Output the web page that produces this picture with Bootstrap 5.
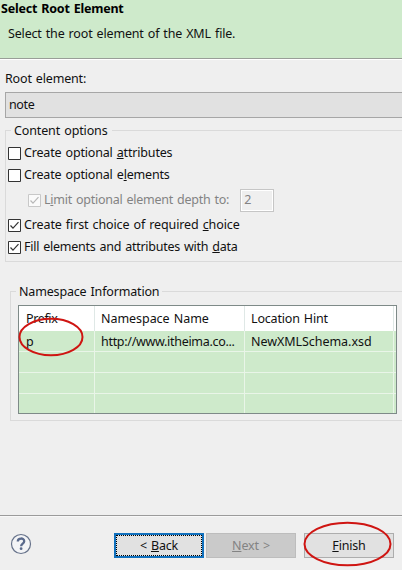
<!DOCTYPE html>
<html lang="en">
<head>
<meta charset="utf-8">
<title>Select Root Element</title>
<meta name="viewport" content="width=device-width, initial-scale=1">
<link href="https://cdn.jsdelivr.net/npm/bootstrap@5.3.0/dist/css/bootstrap.min.css" rel="stylesheet">
<style>
body{width:402px;height:570px;background:#efefef;color:#111;font:12.5px/20px "Noto Sans","Open Sans",sans-serif;white-space:nowrap}
.dialog{width:402px;height:570px}
.t{display:inline-block;line-height:20px;word-spacing:1px;letter-spacing:-.17px}
.w1{letter-spacing:-.21px}.w4,.w12{letter-spacing:-.37px}.w5{letter-spacing:-.13px}
.w8,.w10{letter-spacing:-.25px}.w9{letter-spacing:-.12px}.w13,.w16{letter-spacing:-.05px}.w15{letter-spacing:-.3px}
.banner{height:60px;background:#ceeacb;border-bottom:1px solid #fff;box-shadow:inset 0 -1px #999e98;padding:0 0 0 1px}
.banner h1{font-size:12.5px;height:17px;color:#000}
.banner h1 .t{line-height:17px}
.banner p{margin:7px 0 0 7px}
.root-label{margin:9px 0 0 5px;height:20px}
.combo{margin:3px 0 0 5px;height:26px;background:#e1e1e1;border:1px solid #a6a6a6;border-right:0;padding:2px 0 0 3px}
.group{border:1px solid #dadada;border-right:0}
.group-title{width:max-content;height:20px;margin-top:-10px;margin-left:5px;background:#efefef}
.g1{margin:12px 0 0 5px;height:132px}
.g1 .group-title{padding:0 4px 0 3px;margin-bottom:1px}
.opt{height:22px;gap:3px;padding-left:2px}
.opt svg{width:13px;height:13px;flex:none}
.opt.deep{height:28px;padding-left:22px;color:#838383}
.depth{width:34px;height:23px;border:1px solid #c6c6c6;box-shadow:inset 0 0 0 1px #fff;padding:0 3px;margin-left:8px}
.g2{margin:29px 0 0 10px;height:130px}
.g2 .group-title{padding:0 3px}
.sheet{margin:3px 0 0 7px;width:379px;height:109px;border:1px solid #7e8a88;background:#ceeacb}
.line{display:grid;grid-template-columns:76px 150px 149px 1fr;height:21px;border-bottom:1px solid #e9f5e8}
.line:last-child{border-bottom:0;height:19px}
.line.head{height:25px;background:#fff;border:0}
.line>div{border-right:1px solid #e9f5e8;padding-left:7px;line-height:22px}
.line>div+div{padding-left:6px}
.line.head>div{border-color:#dfe8e6;line-height:26px}
.foot{margin-top:94px;border-top:1px solid #9b9b9b;box-shadow:inset 0 1px #f8f8f8;height:55px;padding:17px 0 0 10px}
.foot .btn{width:90px;height:25px;padding:0;border-radius:0;font-size:12.5px;line-height:22px;border:1px solid #adadad;background:#e1e1e1;color:#111}
.foot .back{margin-left:82px;border:2px solid #1070bd;line-height:20px;outline:1px dotted #000;outline-offset:-3px}
.foot .next{margin-left:2px;background:#cacaca;border-color:#bdbdbd;color:#838383}
.foot .finish{margin-left:8px}
.ring{position:absolute;left:0;top:0;pointer-events:none}
</style>
<script src="https://cdn.jsdelivr.net/npm/bootstrap@5.3.0/dist/js/bootstrap.bundle.min.js"></script>
</head>
<body class="m-0 overflow-hidden">
<main class="dialog position-relative overflow-hidden">
  <header class="banner">
    <h1 class="fw-bold d-flex mb-0"><span class="t w1">Select Root Element</span></h1>
    <p><span class="t w2">Select the root element of the XML file.</span></p>
  </header>
  <div class="root-label"><span class="t w3">Root element:</span></div>
  <div class="combo"><span class="t w4">note</span></div>

  <section class="group g1">
    <div class="group-title"><span class="t w5">Content options</span></div>
    <div class="opt d-flex align-items-center"><svg viewBox="0 0 13 13"><path d="M.5.5h12v12H.5z" fill="#fff" stroke="#333"/></svg><span class="t w6">Create optional <u>a</u>ttributes</span></div>
    <div class="opt d-flex align-items-center"><svg viewBox="0 0 13 13"><path d="M.5.5h12v12H.5z" fill="#fff" stroke="#333"/></svg><span class="t w7">Create optional e<u>l</u>ements</span></div>
    <div class="opt deep d-flex align-items-center"><svg viewBox="0 0 13 13"><path d="M.5.5h12v12H.5z" fill="#fafafa" stroke="#c8c8c8"/><path d="M2.5 6.5 5 9.2l5.5-6" fill="none" stroke="#b8b8b8" stroke-width="1.2"/></svg><span class="t w8">L<u>i</u>mit optional element depth to:</span><div class="depth"><span class="t">2</span></div></div>
    <div class="opt d-flex align-items-center"><svg viewBox="0 0 13 13"><path d="M.5.5h12v12H.5z" fill="#fff" stroke="#333"/><path d="M2.5 6.5 5 9.2l5.5-6" fill="none" stroke="#333" stroke-width="1.2"/></svg><span class="t w9">Create first choice of required <u>c</u>hoice</span></div>
    <div class="opt d-flex align-items-center"><svg viewBox="0 0 13 13"><path d="M.5.5h12v12H.5z" fill="#fff" stroke="#333"/><path d="M2.5 6.5 5 9.2l5.5-6" fill="none" stroke="#333" stroke-width="1.2"/></svg><span class="t w10">Fill elements and attributes with <u>d</u>ata</span></div>
  </section>

  <section class="group g2">
    <div class="group-title"><span class="t w11">Namespace Information</span></div>
    <div class="sheet">
      <div class="line head"><div><span class="t w12">Prefix</span></div><div><span class="t w13">Namespace Name</span></div><div><span class="t w14">Location Hint</span></div></div>
      <div class="line"><div>p</div><div><span class="t w15">http://www.itheima.co...</span></div><div><span class="t w16">NewXMLSchema.xsd</span></div></div>
      <div class="line"><div></div><div></div><div></div></div>
      <div class="line"><div></div><div></div><div></div></div>
      <div class="line"><div></div><div></div><div></div></div>
    </div>
  </section>

  <footer class="foot d-flex align-items-start">
    <svg class="help" width="22" height="22" viewBox="0 0 22 22"><circle cx="11" cy="11" r="9.5" fill="#f3f4f6" stroke="#66728a" stroke-width="1.2"/><path d="M7.8 8.4C7.8 4.6 14.2 4.6 14.2 8.2c0 2.3-3.1 2.4-3.1 5" fill="none" stroke="#5a6a8c" stroke-width="2.3"/><circle cx="11.1" cy="15.7" r="1.4" fill="#5a6a8c"/></svg>
    <button class="btn back"><span class="t w17">&lt; <u>B</u>ack</span></button>
    <button class="btn next"><span class="t w18"><u>N</u>ext &gt;</span></button>
    <button class="btn finish"><span class="t w19"><u>F</u>inish</span></button>
  </footer>

  <svg class="ring" width="402" height="570" viewBox="0 0 402 570" fill="none" stroke="#cf1512" stroke-width="2"><ellipse cx="51" cy="337" rx="31.5" ry="18.3"/><ellipse cx="347.5" cy="544" rx="43" ry="21.3"/></svg>
</main>
</body>
</html>
